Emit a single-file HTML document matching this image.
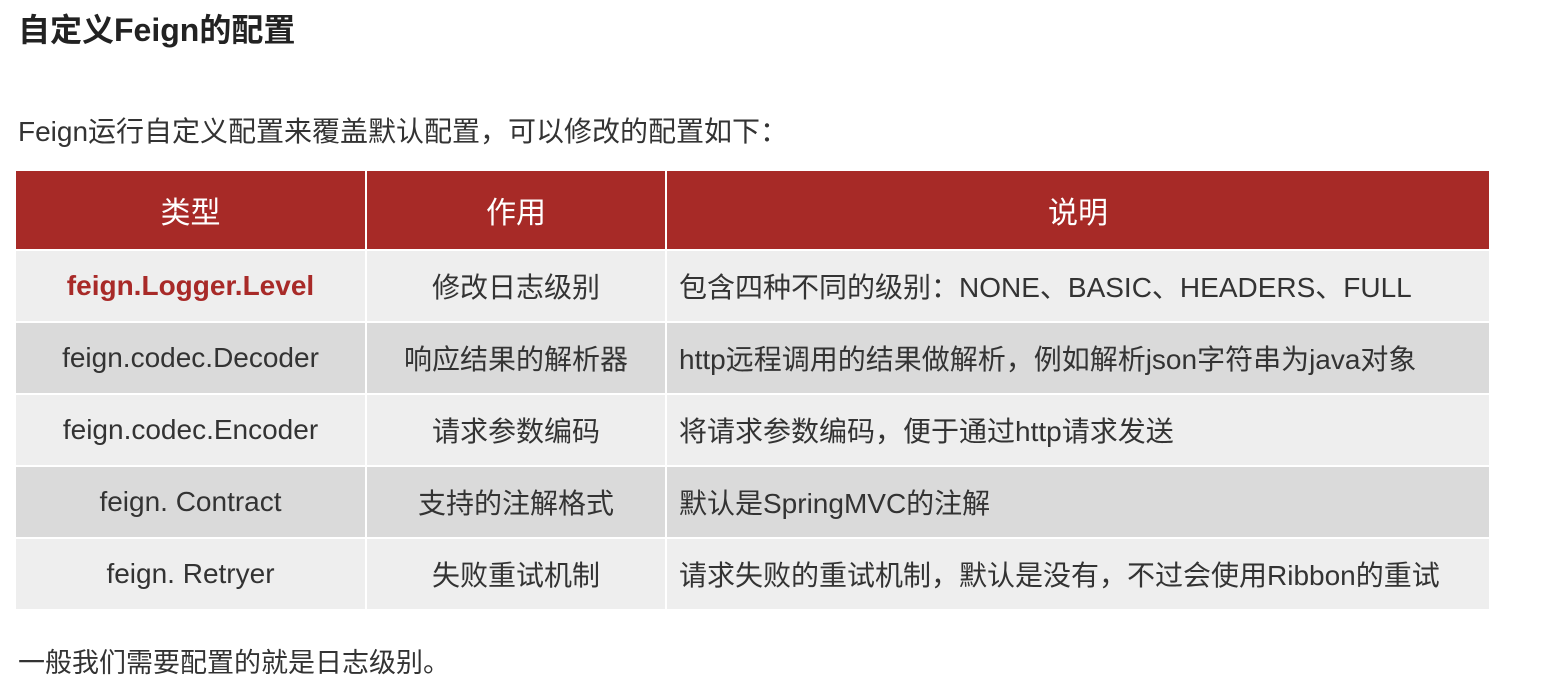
<!DOCTYPE html>
<html><head><meta charset="utf-8"><style>
body{margin:0;width:1554px;height:691px;background:#fff;font-family:"Liberation Sans","Noto Sans CJK SC",sans-serif;color:#222;position:relative;overflow:hidden}
.t{position:absolute;left:18px;top:5px;font-size:32px;font-weight:bold;color:#222}
.p{position:absolute;left:18px;top:110px;font-size:28px;color:#333}
.q{position:absolute;left:18px;top:641px;font-size:27px;color:#333}
table{position:absolute;left:14px;top:169px;border-collapse:collapse;width:1477px}
td,th{border:2px solid #fff;font-size:28px;font-weight:normal;color:#333;text-align:center;padding:0}
th{background:#a72a27;color:#fff;height:78px;font-size:30px}
td{height:70px}
td.l{text-align:left;padding-left:12px}
tr.a td{background:#eeeeee}
tr.b td{background:#dadada}
.r{color:#a82a28;font-weight:bold}
</style></head><body>
<div class="t">自定义Feign的配置</div>
<div class="p">Feign运行自定义配置来覆盖默认配置，可以修改的配置如下：</div>
<table>
<tr><th style="width:349px">类型</th><th style="width:298px">作用</th><th>说明</th></tr>
<tr class="a"><td class="r">feign.Logger.Level</td><td>修改日志级别</td><td class="l">包含四种不同的级别：NONE、BASIC、HEADERS、FULL</td></tr>
<tr class="b"><td>feign.codec.Decoder</td><td>响应结果的解析器</td><td class="l">http远程调用的结果做解析，例如解析json字符串为java对象</td></tr>
<tr class="a"><td>feign.codec.Encoder</td><td>请求参数编码</td><td class="l">将请求参数编码，便于通过http请求发送</td></tr>
<tr class="b"><td>feign. Contract</td><td>支持的注解格式</td><td class="l">默认是SpringMVC的注解</td></tr>
<tr class="a"><td>feign. Retryer</td><td>失败重试机制</td><td class="l">请求失败的重试机制，默认是没有，不过会使用Ribbon的重试</td></tr>
</table>
<div class="q">一般我们需要配置的就是日志级别。</div>
</body></html>
